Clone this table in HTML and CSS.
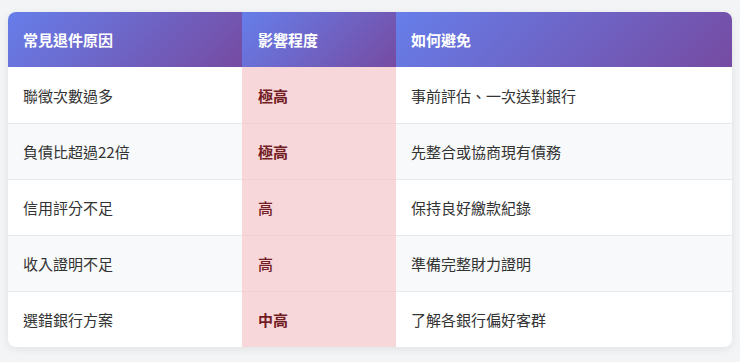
FILE: index.html
```html
<!DOCTYPE html>
<html lang="zh-Hant">
<head>
<meta charset="utf-8">
<link rel="stylesheet" href="styles.css">
</head>
<body>
<div class="wrap">
<table class="tbl">
<thead>
<tr><th class="c1">常見退件原因</th><th class="c2">影響程度</th><th class="c3">如何避免</th></tr>
</thead>
<tbody>
<tr><td>聯徵次數過多</td><td class="lvl"><strong>極高</strong></td><td>事前評估、一次送對銀行</td></tr>
<tr class="alt"><td>負債比超過22倍</td><td class="lvl"><strong>極高</strong></td><td>先整合或協商現有債務</td></tr>
<tr><td>信用評分不足</td><td class="lvl">高</td><td>保持良好繳款紀錄</td></tr>
<tr class="alt"><td>收入證明不足</td><td class="lvl">高</td><td>準備完整財力證明</td></tr>
<tr><td>選錯銀行方案</td><td class="lvl"><strong>中高</strong></td><td>了解各銀行偏好客群</td></tr>
</tbody>
</table>
</div>
</body>
</html>
```
FILE: styles.css
```css
html, body { margin: 0; padding: 0; }
body {
  background: #f3f4f6;
  font-family: "Noto Sans CJK TC", "Noto Sans", sans-serif;
  color: #333;
}
.wrap { padding: 12px 8px 14px 8px; }
.tbl {
  width: 724px;
  border-collapse: separate;
  border-spacing: 0;
  background: #fff;
  border-radius: 8px;
  overflow: hidden;
  box-shadow: 0 2px 8px rgba(0,0,0,0.08);
  table-layout: fixed;
}
.tbl th {
  background: linear-gradient(135deg, #667eea 0%, #764ba2 100%);
  color: #fff;
  font-weight: 700;
  font-size: 15px;
  text-align: left;
  height: 55px;
  padding: 0 15px;
  box-sizing: border-box;
}
.tbl th.c1 { width: 234px; }
.tbl th.c2 { width: 154px; padding-left: 16px; }
.tbl th.c3 { width: 336px; }
.tbl td {
  height: 56px;
  box-sizing: border-box;
  padding: 0 15px;
  font-size: 15px;
  border-top: 1px solid #e6e8eb;
}
.tbl tbody tr:first-child td { border-top: none; }
.tbl tr.alt td { background: #f8f9fa; }
.tbl td.lvl, .tbl tr.alt td.lvl {
  background: #f8d7da;
  color: #721c24;
  font-weight: 500;
  padding-left: 16px;
  border-top-color: #f0d0d3;
}
.tbl td.lvl strong { font-weight: 700; }
```
